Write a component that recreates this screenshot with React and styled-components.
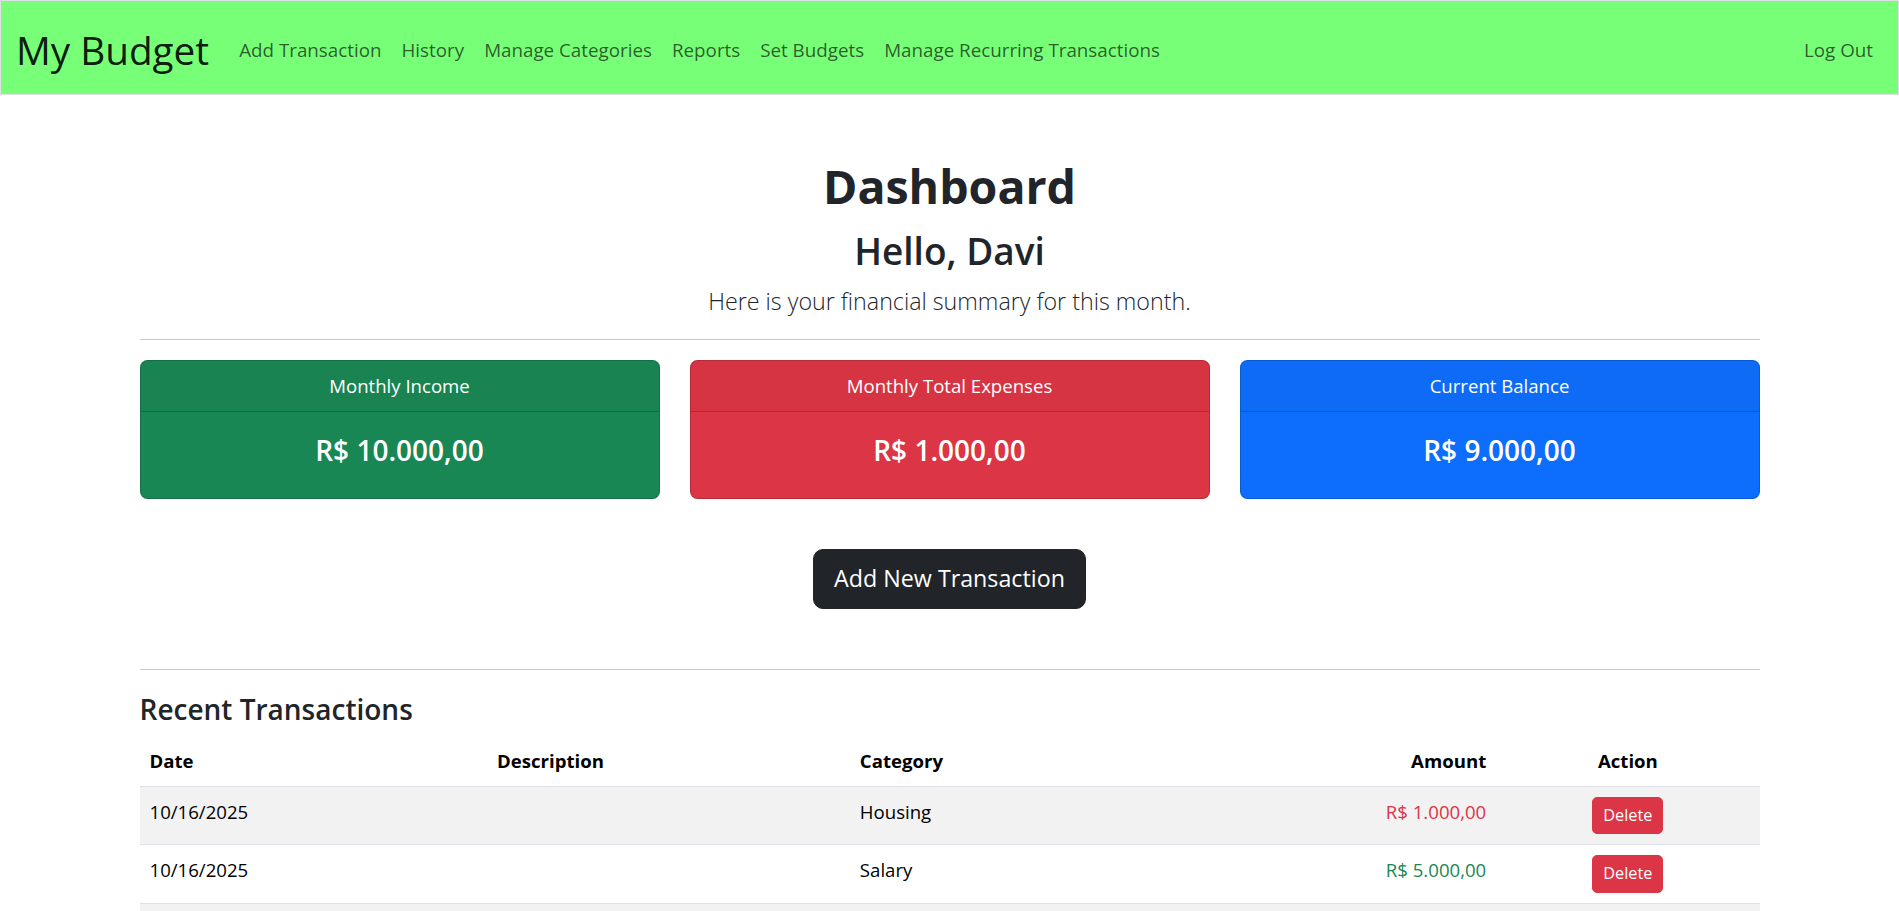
import React from 'react';
import styled, { createGlobalStyle } from 'styled-components';

const GlobalStyle = createGlobalStyle`
  *, *::before, *::after { box-sizing: border-box; }
  body {
    margin: 0;
    font-family: "Open Sans", "Noto Sans", "Liberation Sans", Arial, sans-serif;
    font-size: 18.6px;
    line-height: 30px;
    color: #212529;
    background: #fff;
  }
`;

const NavBar = styled.nav`
  display: flex;
  align-items: center;
  background: #77ff77;
  border: 1px solid #dee2e6;
  padding: 13px 15px 7px;
`;

const Brand = styled.a`
  font-size: 38.7px;
  line-height: 60px;
  padding: 6.25px 0;
  margin-right: 20px;
  color: rgba(0, 0, 0, 0.9);
  text-decoration: none;
  white-space: nowrap;
`;

const NavList = styled.ul`
  display: flex;
  flex: 1;
  list-style: none;
  margin: 0;
  padding: 0;
`;

const NavItem = styled.li`
  margin-left: ${(p) => (p.$end ? 'auto' : '0')};
`;

const NavLink = styled.a`
  display: block;
  padding: 10px;
  font-size: 18.8px;
  color: rgba(0, 0, 0, 0.65);
  text-decoration: none;
  white-space: nowrap;
`;

const Container = styled.main`
  max-width: 1650px;
  margin: 61px auto 0;
  padding: 0 15px;
`;

const Header = styled.header`
  text-align: center;
`;

const Title = styled.h1`
  margin: 0 0 11px;
  font-size: 46.5px;
  line-height: 60px;
  font-weight: 700;
`;

const Greeting = styled.h2`
  margin: 0 0 8px;
  font-size: 37px;
  line-height: 48px;
  font-weight: 600;
`;

const Lead = styled.p`
  margin: 0;
  font-size: 23.25px;
  line-height: 37.5px;
  font-weight: 300;
`;

const Divider = styled.hr`
  margin: ${(p) => p.$top}px 0 ${(p) => p.$bottom}px;
  border: 0;
  border-top: 1px solid #212529;
  opacity: 0.25;
`;

const CardGrid = styled.section`
  display: grid;
  grid-template-columns: repeat(3, 1fr);
  gap: 30px;
  margin-bottom: 50px;
`;

const Card = styled.div`
  background: ${(p) => p.$bg};
  color: #fff;
  border: 1px solid rgba(0, 0, 0, 0.175);
  border-radius: 7.5px;
  text-align: center;
  overflow: hidden;
`;

const CardHeader = styled.div`
  padding: 10px 20px;
  background: rgba(33, 37, 41, 0.03);
  border-bottom: 1px solid rgba(0, 0, 0, 0.175);
`;

const CardBody = styled.div`
  padding: 20px;
`;

const CardAmount = styled.h4`
  margin: 0 0 10px;
  font-size: 28px;
  line-height: 36px;
  font-weight: 600;
`;

const ActionRow = styled.div`
  display: flex;
  justify-content: center;
`;

const BigButton = styled.button`
  font-family: inherit;
  font-size: 23.25px;
  line-height: 37.5px;
  padding: 10px 20px;
  background: #212529;
  color: #fff;
  border: 1px solid #212529;
  border-radius: 10px;
  cursor: pointer;
`;

const SectionTitle = styled.h4`
  margin: 0 0 9px;
  font-size: 28px;
  line-height: 36px;
  font-weight: 600;
`;

const Table = styled.table`
  width: 100%;
  border-collapse: collapse;
  table-layout: fixed;
  color: #000;
`;

const Th = styled.th`
  padding: 10px;
  font-weight: 700;
  text-align: ${(p) => p.$align || 'left'};
  border-bottom: 1px solid #dee2e6;
  vertical-align: top;
`;

const Row = styled.tr`
  background: ${(p) => (p.$striped ? '#f2f2f2' : '#fff')};
`;

const Td = styled.td`
  padding: 10px;
  height: 58px;
  text-align: ${(p) => p.$align || 'left'};
  color: ${(p) => p.$color || '#000'};
  border-bottom: 1px solid #dee2e6;
  vertical-align: top;
`;

const DeleteButton = styled.button`
  font-family: inherit;
  font-size: 16.3px;
  line-height: 25.5px;
  padding: 5px 10px;
  background: #dc3545;
  color: #fff;
  border: 1px solid #dc3545;
  border-radius: 5px;
  cursor: pointer;
`;

const links = [
  'Add Transaction',
  'History',
  'Manage Categories',
  'Reports',
  'Set Budgets',
  'Manage Recurring Transactions',
];

const cards = [
  { title: 'Monthly Income', amount: 'R$ 10.000,00', bg: '#198754' },
  { title: 'Monthly Total Expenses', amount: 'R$ 1.000,00', bg: '#dc3545' },
  { title: 'Current Balance', amount: 'R$ 9.000,00', bg: '#0d6efd' },
];

const transactions = [
  { date: '10/16/2025', description: '', category: 'Housing', amount: 'R$ 1.000,00', color: '#dc3545' },
  { date: '10/16/2025', description: '', category: 'Salary', amount: 'R$ 5.000,00', color: '#198754' },
];

export default function App() {
  return (
    <>
      <GlobalStyle />
      <NavBar>
        <Brand href="#">My Budget</Brand>
        <NavList>
          {links.map((l) => (
            <NavItem key={l}>
              <NavLink href="#">{l}</NavLink>
            </NavItem>
          ))}
          <NavItem $end>
            <NavLink href="#">Log Out</NavLink>
          </NavItem>
        </NavList>
      </NavBar>
      <Container>
        <Header>
          <Title>Dashboard</Title>
          <Greeting>Hello, Davi</Greeting>
          <Lead>Here is your financial summary for this month.</Lead>
        </Header>
        <Divider $top={19} $bottom={20} />
        <CardGrid>
          {cards.map((c) => (
            <Card key={c.title} $bg={c.bg}>
              <CardHeader>{c.title}</CardHeader>
              <CardBody>
                <CardAmount>{c.amount}</CardAmount>
              </CardBody>
            </Card>
          ))}
        </CardGrid>
        <ActionRow>
          <BigButton>Add New Transaction</BigButton>
        </ActionRow>
        <Divider $top={60} $bottom={21} />
        <SectionTitle>Recent Transactions</SectionTitle>
        <Table>
          <colgroup>
            <col style={{ width: '21.45%' }} />
            <col style={{ width: '22.4%' }} />
            <col style={{ width: '20%' }} />
            <col style={{ width: '19.9%' }} />
            <col style={{ width: '16.25%' }} />
          </colgroup>
          <thead>
            <tr>
              <Th>Date</Th>
              <Th>Description</Th>
              <Th>Category</Th>
              <Th $align="right">Amount</Th>
              <Th $align="center">Action</Th>
            </tr>
          </thead>
          <tbody>
            {transactions.map((t, i) => (
              <Row key={i} $striped={i % 2 === 0}>
                <Td>{t.date}</Td>
                <Td>{t.description}</Td>
                <Td>{t.category}</Td>
                <Td $align="right" $color={t.color}>{t.amount}</Td>
                <Td $align="center">
                  <DeleteButton>Delete</DeleteButton>
                </Td>
              </Row>
            ))}
            <Row $striped>
              <Td colSpan={5} />
            </Row>
          </tbody>
        </Table>
      </Container>
    </>
  );
}
